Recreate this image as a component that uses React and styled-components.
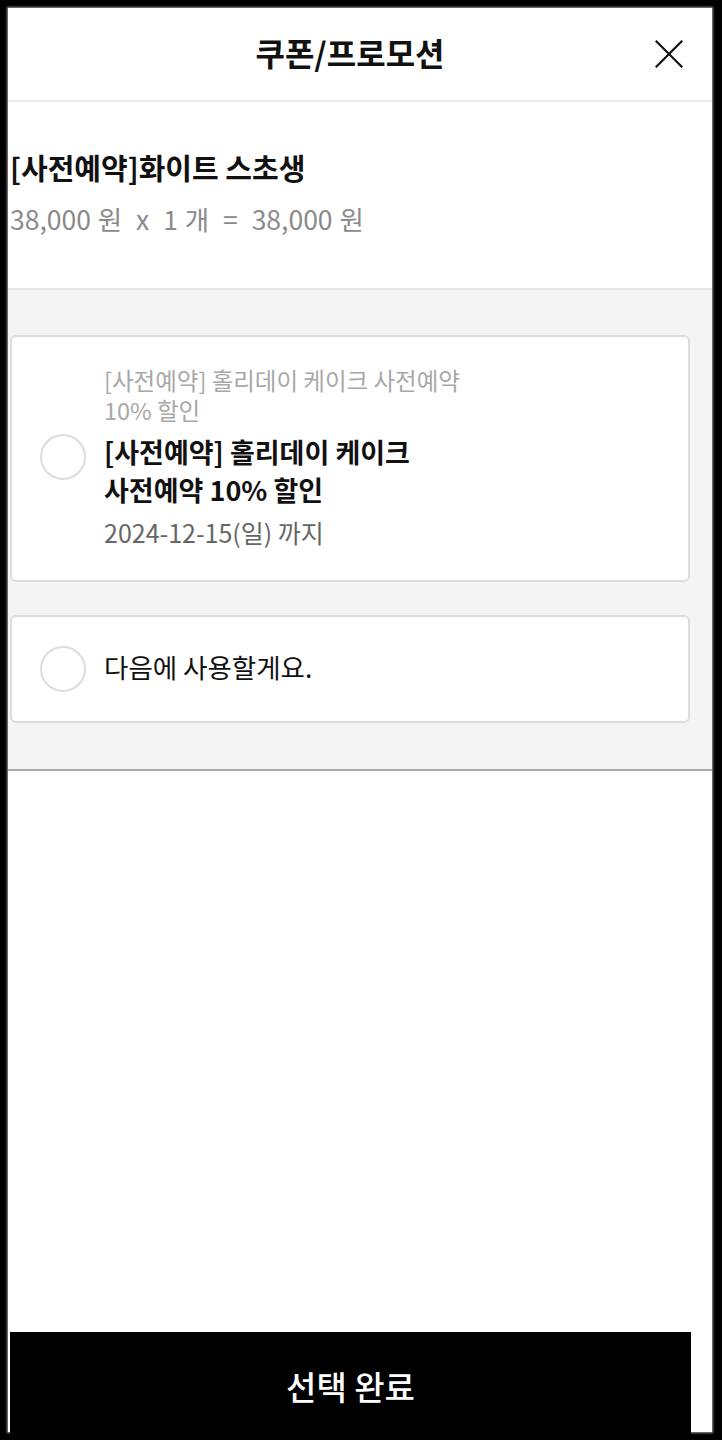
import React from "react";
import styled, { createGlobalStyle } from "styled-components";

const Global = createGlobalStyle`
  html, body { margin: 0; padding: 0; background: #000; }
  body { font-family: "Noto Sans CJK KR", "Noto Sans", sans-serif; }
  * { box-sizing: border-box; }
`;

const Frame = styled.div`
  padding: 8px 10px 0 8px;
  min-height: 1440px;
  display: flex;
  flex-direction: column;
`;

const Panel = styled.div`
  background: #fff;
  min-height: 1424px;
  display: flex;
  flex-direction: column;
  box-shadow: 0 0 2px 1px rgba(255,255,255,0.6);
`;

const Header = styled.header`
  position: relative;
  height: 94px;
  display: flex;
  align-items: center;
  justify-content: center;
  padding: 0 22px 4px 2px;
  border-bottom: 2px solid #ebebeb;
`;

const Title = styled.h1`
  margin: 0;
  font-size: 32px;
  font-weight: 700;
  color: #111;
`;

const Close = styled.button`
  position: absolute;
  right: 29px;
  top: 32px;
  width: 28px;
  height: 28px;
  padding: 0;
  border: 0;
  background: none;
  display: flex;
  align-items: center;
  justify-content: center;
`;

const Product = styled.section`
  padding: 45px 22px 52px 2px;
  display: flex;
  flex-direction: column;
  gap: 15px;
`;

const ProductName = styled.div`
  font-size: 29px;
  font-weight: 700;
  color: #111;
  line-height: 40px;
`;

const Price = styled.div`
  font-size: 26.5px;
  color: #8a8a8a;
  line-height: 34px;
  white-space: pre;
  word-spacing: 1px;
`;

const CouponArea = styled.section`
  background: #f4f4f4;
  border-top: 2px solid #e6e6e6;
  border-bottom: 2px solid #a8a8a8;
  padding: 45px 22px 46px 2px;
  display: flex;
  flex-direction: column;
  gap: 33px;
`;

const Card = styled.label`
  background: #fff;
  border: 2px solid #dcdcdc;
  border-radius: 6px;
  display: flex;
  align-items: center;
  gap: 18px;
  padding: ${(p) => p.$pad};
  cursor: pointer;
`;

const Radio = styled.span`
  flex: none;
  width: 46px;
  height: 46px;
  border-radius: 50%;
  border: 2px solid #dcdcdc;
  background: #fff;
`;

const Info = styled.div`
  display: flex;
  flex-direction: column;
`;

const SubName = styled.div`
  font-size: 23.5px;
  line-height: 30px;
  color: #a8a8a8;
  width: 380px;
`;

const CouponName = styled.div`
  margin-top: 8px;
  font-size: 27px;
  line-height: 38px;
  font-weight: 700;
  color: #111;
`;

const DateText = styled.div`
  margin-top: 6px;
  font-size: 25px;
  line-height: 34px;
  color: #666;
`;

const Plain = styled.div`
  font-size: 26.5px;
  line-height: 36px;
  color: #111;
  margin-top: -4px;
`;

const Spacer = styled.div`
  flex: 1;
`;

const Submit = styled.button`
  margin: 0 21px -8px 2px;
  height: 108px;
  border: 0;
  background: #000;
  color: #fff;
  font-family: inherit;
  font-size: 33px;
  font-weight: 500;
`;

export default function App() {
  return (
    <>
      <Global />
      <Frame>
        <Panel>
          <Header>
            <Title>쿠폰/프로모션</Title>
            <Close aria-label="닫기">
              <svg width="28" height="28" viewBox="0 0 28 28" fill="none" stroke="#111" strokeWidth="2.2" strokeLinecap="square">
                <path d="M1.5 1.5 L26.5 26.5 M26.5 1.5 L1.5 26.5" />
              </svg>
            </Close>
          </Header>
          <Product>
            <ProductName>[사전예약]화이트 스초생</ProductName>
            <Price>{"38,000 원  x  1 개  =  38,000 원"}</Price>
          </Product>
          <CouponArea>
            <Card $pad="28px 20px 31px 28px">
              <Radio />
              <Info>
                <SubName>[사전예약] 홀리데이 케이크 사전예약 10% 할인</SubName>
                <CouponName>
                  [사전예약] 홀리데이 케이크
                  <br />
                  사전예약 10% 할인
                </CouponName>
                <DateText>2024-12-15(일) 까지</DateText>
              </Info>
            </Card>
            <Card $pad="29px 20px 29px 28px">
              <Radio />
              <Plain>다음에 사용할게요.</Plain>
            </Card>
          </CouponArea>
          <Spacer />
          <Submit>선택 완료</Submit>
        </Panel>
      </Frame>
    </>
  );
}
